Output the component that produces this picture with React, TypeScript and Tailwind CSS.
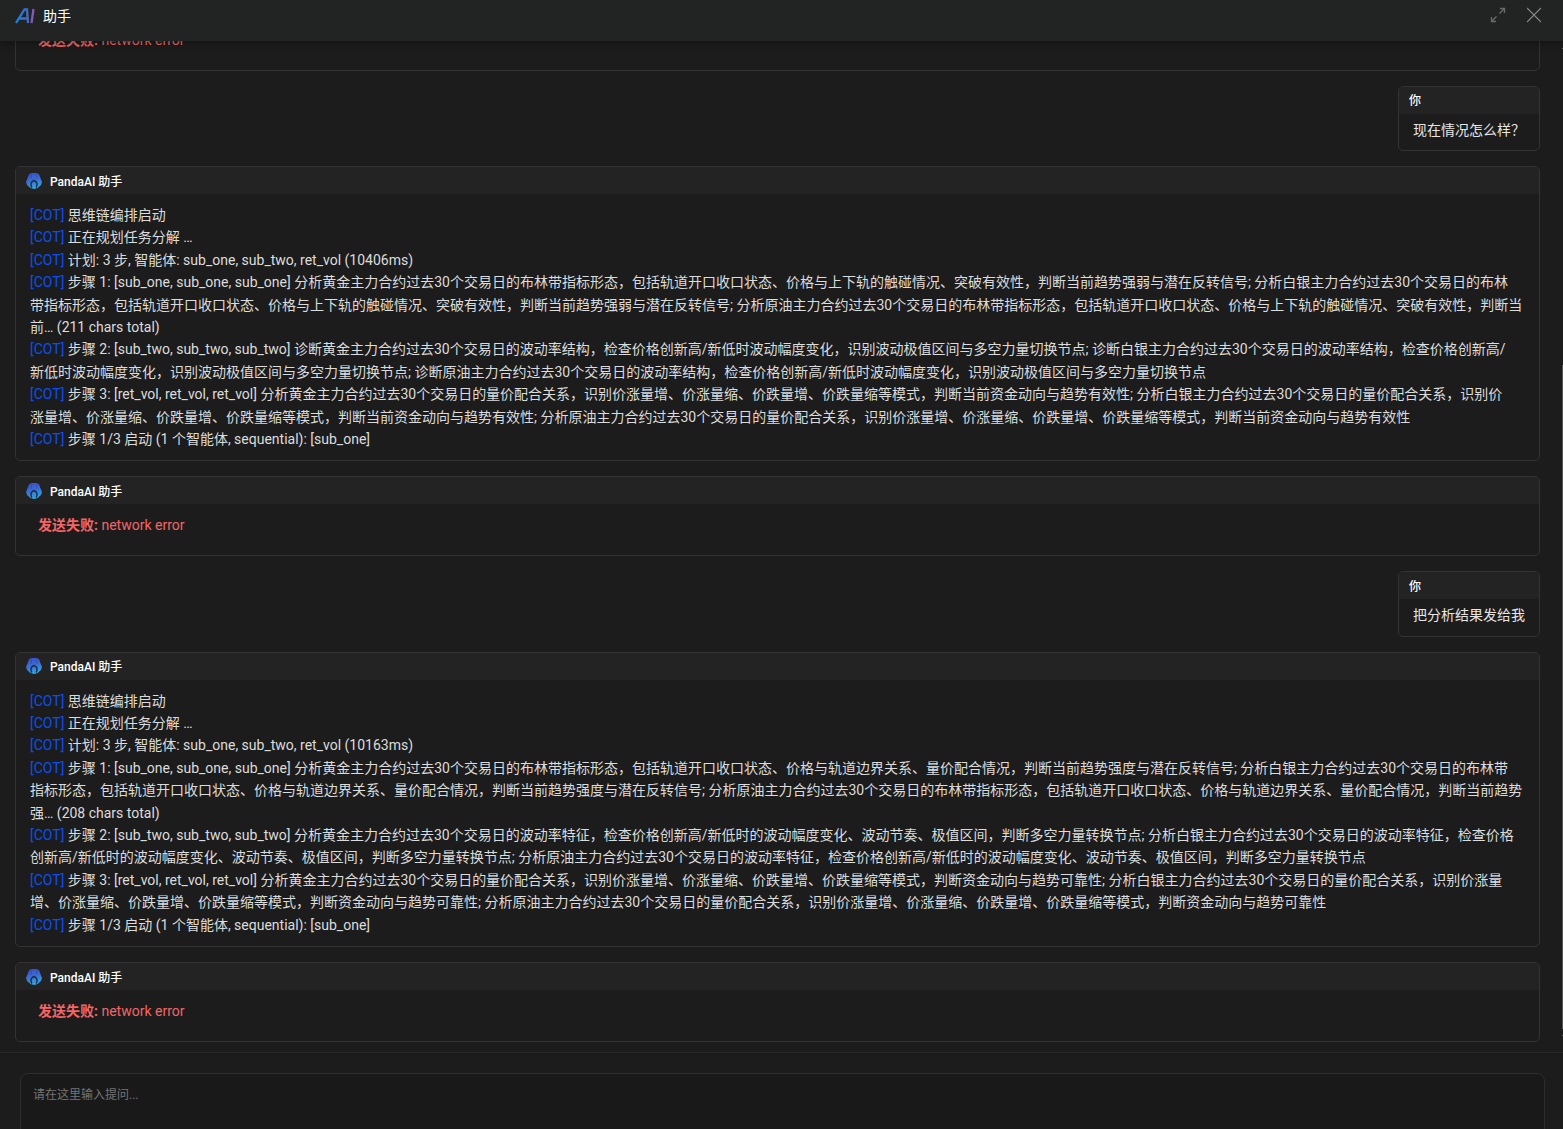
import { useState } from 'react';

type Message =
  | { id: number; role: 'user'; text: string }
  | { id: number; role: 'assistant'; lines: string[] }
  | { id: number; role: 'error'; text: string };

const messages: Message[] = [
  { id: 1, role: 'error', text: 'network error' },
  { id: 2, role: 'user', text: '现在情况怎么样？' },
  {
    id: 3,
    role: 'assistant',
    lines: [
      '思维链编排启动',
      '正在规划任务分解 …',
      '计划: 3 步, 智能体: sub_one, sub_two, ret_vol (10406ms)',
      '步骤 1: [sub_one, sub_one, sub_one] 分析黄金主力合约过去30个交易日的布林带指标形态，包括轨道开口收口状态、价格与上下轨的触碰情况、突破有效性，判断当前趋势强弱与潜在反转信号; 分析白银主力合约过去30个交易日的布林\n带指标形态，包括轨道开口收口状态、价格与上下轨的触碰情况、突破有效性，判断当前趋势强弱与潜在反转信号; 分析原油主力合约过去30个交易日的布林带指标形态，包括轨道开口收口状态、价格与上下轨的触碰情况、突破有效性，判断当\n前… (211 chars total)',
      '步骤 2: [sub_two, sub_two, sub_two] 诊断黄金主力合约过去30个交易日的波动率结构，检查价格创新高/新低时波动幅度变化，识别波动极值区间与多空力量切换节点; 诊断白银主力合约过去30个交易日的波动率结构，检查价格创新高/\n新低时波动幅度变化，识别波动极值区间与多空力量切换节点; 诊断原油主力合约过去30个交易日的波动率结构，检查价格创新高/新低时波动幅度变化，识别波动极值区间与多空力量切换节点',
      '步骤 3: [ret_vol, ret_vol, ret_vol] 分析黄金主力合约过去30个交易日的量价配合关系，识别价涨量增、价涨量缩、价跌量增、价跌量缩等模式，判断当前资金动向与趋势有效性; 分析白银主力合约过去30个交易日的量价配合关系，识别价\n涨量增、价涨量缩、价跌量增、价跌量缩等模式，判断当前资金动向与趋势有效性; 分析原油主力合约过去30个交易日的量价配合关系，识别价涨量增、价涨量缩、价跌量增、价跌量缩等模式，判断当前资金动向与趋势有效性',
      '步骤 1/3 启动 (1 个智能体, sequential): [sub_one]',
    ],
  },
  { id: 4, role: 'error', text: 'network error' },
  { id: 5, role: 'user', text: '把分析结果发给我' },
  {
    id: 6,
    role: 'assistant',
    lines: [
      '思维链编排启动',
      '正在规划任务分解 …',
      '计划: 3 步, 智能体: sub_one, sub_two, ret_vol (10163ms)',
      '步骤 1: [sub_one, sub_one, sub_one] 分析黄金主力合约过去30个交易日的布林带指标形态，包括轨道开口收口状态、价格与轨道边界关系、量价配合情况，判断当前趋势强度与潜在反转信号; 分析白银主力合约过去30个交易日的布林带\n指标形态，包括轨道开口收口状态、价格与轨道边界关系、量价配合情况，判断当前趋势强度与潜在反转信号; 分析原油主力合约过去30个交易日的布林带指标形态，包括轨道开口收口状态、价格与轨道边界关系、量价配合情况，判断当前趋势\n强… (208 chars total)',
      '步骤 2: [sub_two, sub_two, sub_two] 分析黄金主力合约过去30个交易日的波动率特征，检查价格创新高/新低时的波动幅度变化、波动节奏、极值区间，判断多空力量转换节点; 分析白银主力合约过去30个交易日的波动率特征，检查价格\n创新高/新低时的波动幅度变化、波动节奏、极值区间，判断多空力量转换节点; 分析原油主力合约过去30个交易日的波动率特征，检查价格创新高/新低时的波动幅度变化、波动节奏、极值区间，判断多空力量转换节点',
      '步骤 3: [ret_vol, ret_vol, ret_vol] 分析黄金主力合约过去30个交易日的量价配合关系，识别价涨量增、价涨量缩、价跌量增、价跌量缩等模式，判断资金动向与趋势可靠性; 分析白银主力合约过去30个交易日的量价配合关系，识别价涨量\n增、价涨量缩、价跌量增、价跌量缩等模式，判断资金动向与趋势可靠性; 分析原油主力合约过去30个交易日的量价配合关系，识别价涨量增、价涨量缩、价跌量增、价跌量缩等模式，判断资金动向与趋势可靠性',
      '步骤 1/3 启动 (1 个智能体, sequential): [sub_one]',
    ],
  },
  { id: 7, role: 'error', text: 'network error' },
];

const PandaLogo = () => (
  <svg width="16" height="16" viewBox="0 0 16 16" aria-hidden="true">
    <defs>
      <linearGradient id="panda" x1="0.3" y1="0" x2="0.6" y2="1">
        <stop offset="0" stopColor="#3a50c8" />
        <stop offset="0.5" stopColor="#3a72d2" />
        <stop offset="1" stopColor="#2fb0e0" />
      </linearGradient>
    </defs>
    <path d="M5 0h6l2 1.500L16 9l-1 3-3.500 3L8 16l-3.500-1L1 12 0 9l3-7.500z" fill="url(#panda)" />
    <path d="M5.800 14.500C4 11.500 5 8.500 8 7.500c3 1 4 4 2.200 7" stroke="#1c2c4c" strokeWidth="1.500" fill="none" />
    <path d="M5.500 0.500 5 6M10.500 0.500 11 6" stroke="#2f45ac" strokeWidth="0.600" fill="none" />
  </svg>
);

const AiLogo = () => (
  <svg width="20" height="16" viewBox="0 0 20 16" fill="none" aria-hidden="true">
    <defs>
      <linearGradient id="ai" x1="0" y1="0" x2="20" y2="0" gradientUnits="userSpaceOnUse">
        <stop offset="0" stopColor="#0f86e0" />
        <stop offset="0.600" stopColor="#4468c8" />
        <stop offset="1" stopColor="#9a55b5" />
      </linearGradient>
    </defs>
    <path d="M1 15 9.500 1.500H12L13 15M4.500 10.500h8M18.500 1 16.500 15" stroke="url(#ai)" strokeWidth="2.300" />
  </svg>
);

const MessageCard = ({ message }: { message: Message }) => {
  const isUser = message.role === 'user';

  return (
    <article
      className={`shrink-0 overflow-hidden rounded-[5px] border border-[#333333] ${isUser ? 'self-end' : ''}`}
    >
      <header className="flex h-[27px] items-center gap-2 bg-[#232323] px-[10px] text-xs font-medium text-white">
        {!isUser && <PandaLogo />}
        <span className="pt-0.5">{isUser ? '你' : 'PandaAI 助手'}</span>
      </header>

      {message.role === 'user' && (
        <p className="px-[14px] pt-[5px] pb-[9px] text-[#e6e6e6]">{message.text}</p>
      )}

      {message.role === 'assistant' && (
        <div className="px-[14px] py-[10px] whitespace-pre-line">
          {message.lines.map((line) => (
            <p key={line}>
              <span className="text-[#0a50f0]">[COT]</span> {line}
            </p>
          ))}
        </div>
      )}

      {message.role === 'error' && (
        <p className="px-[22px] pt-[10px] pb-[18px] leading-[23px] text-[#f56565]">
          <strong>发送失败:</strong> {message.text}
        </p>
      )}
    </article>
  );
};

export default function App() {
  const [question, setQuestion] = useState('');

  return (
    <div className="flex h-screen flex-col overflow-hidden bg-[#1c1c1c] font-['Roboto','Noto_Sans_CJK_SC',sans-serif] text-sm leading-[1.6] text-[#dcdcdc]">
      <header className="z-10 flex h-[41px] shrink-0 items-start justify-between bg-[#222423] pr-[22px] pl-[15px] shadow-[0_2px_8px_rgba(0,0,0,0.35)]">
        <div className="flex items-center gap-2 pt-1">
          <AiLogo />
          <h1 className="pt-px text-white">助手</h1>
        </div>
        <div className="flex gap-[21px] pt-[7px]">
          <button type="button" aria-label="展开">
            <svg width="16" height="16" viewBox="0 0 16 16" fill="none" stroke="#6a6a6a" strokeWidth="1.300">
              <path d="M10 1.500h4.500V6M14.500 1.500 9.500 6.500M6 14.500H1.500V10M1.500 14.500l5-5" />
            </svg>
          </button>
          <button type="button" aria-label="关闭">
            <svg width="14" height="16" viewBox="0 0 14 16" fill="none" stroke="#8a8a8a" strokeWidth="1.200">
              <path d="M0 1l14 14M14 1 0 15" />
            </svg>
          </button>
        </div>
      </header>

      <div className="flex min-h-0 flex-1">
        <main className="flex min-w-0 flex-1 flex-col justify-end gap-[15px] overflow-hidden pr-[22px] pb-[10px] pl-[15px]">
          {messages.map((message) => (
            <MessageCard key={message.id} message={message} />
          ))}
        </main>
        {/* scroll track */}
        <div className="flex w-px flex-col pt-[7px] pb-4" aria-hidden="true">
          <div className="h-px bg-[#666666]" />
          <div className="grow" />
          <div className="h-[664px] bg-[#555555]" />
          <div className="mt-[6px] h-px bg-[#666666]" />
        </div>
      </div>

      <footer className="h-[77px] shrink-0 overflow-hidden border-t border-[#282828] pt-5 pr-[18px] pl-5">
        <textarea
          aria-label="提问"
          value={question}
          onChange={(e) => setQuestion(e.target.value)}
          placeholder="请在这里输入提问..."
          className="block h-[100px] w-full resize-none rounded-lg border border-[#2d2d2d] bg-[#191919] px-3 py-[11px] text-xs leading-5 text-white outline-none placeholder:text-[#757575]"
        />
      </footer>
    </div>
  );
}
